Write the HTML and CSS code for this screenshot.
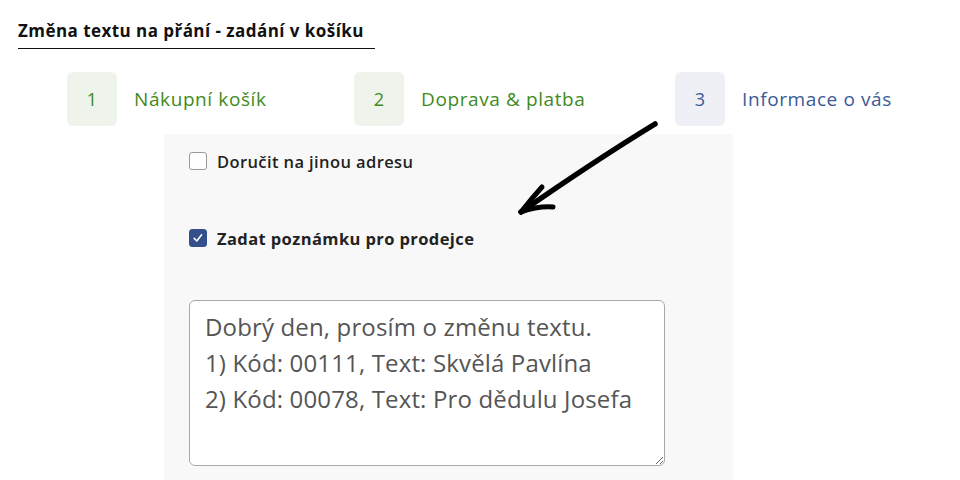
FILE: index.html
```html
<!DOCTYPE html>
<html lang="cs">
<head>
<meta charset="utf-8">
<title>Změna textu na přání</title>
<link rel="stylesheet" href="styles.css">
</head>
<body>
<div class="page">
  <h1 class="title">Změna textu na přání - zadání v košíku</h1>
  <ol class="steps">
    <li class="step step-done"><span class="step-num">1</span><span class="step-label">Nákupní košík</span></li>
    <li class="step step-done"><span class="step-num">2</span><span class="step-label">Doprava &amp; platba</span></li>
    <li class="step step-current"><span class="step-num">3</span><span class="step-label">Informace o vás</span></li>
  </ol>
  <div class="panel">
    <label class="check"><span class="box"></span><span class="check-label">Doručit na jinou adresu</span></label>
    <label class="check check-on"><span class="box"><svg viewBox="0 0 18 18" width="18" height="18"><path d="M5.2 9.4 L7.8 12 L12.6 5.8" fill="none" stroke="#fff" stroke-width="1.6" stroke-linecap="round" stroke-linejoin="round"/></svg></span><span class="check-label">Zadat poznámku pro prodejce</span></label>
    <textarea class="note" readonly>Dobrý den, prosím o změnu textu.
1) Kód: 00111, Text: Skvělá Pavlína
2) Kód: 00078, Text: Pro dědulu Josefa</textarea>
  </div>
  <svg class="arrow" width="960" height="480" viewBox="0 0 960 480">
    <g fill="none" stroke="#000" stroke-linecap="round" stroke-linejoin="round">
      <path d="M655 124 Q596 160 521 212" stroke-width="5.5"/>
      <path d="M521 212 Q532 198 542 187" stroke-width="5"/>
      <path d="M521 212 Q538 206 553 207" stroke-width="5"/>
    </g>
  </svg>
</div>
</body>
</html>
```
FILE: styles.css
```css
* { box-sizing: border-box; }
html, body { margin: 0; padding: 0; background: #fff; }
body { font-family: "Open Sans", "Lato", sans-serif; color: #222; }
.page { position: relative; width: 960px; height: 480px; overflow: hidden; }

.title {
  display: inline-block;
  margin: 0 0 0 18px;
  padding: 19px 11px 5px 0;
  font-size: 17px;
  font-weight: 700;
  line-height: 24px;
  color: #111;
  border-bottom: 1px solid #111;
  letter-spacing: 0.45px;
}

.steps {
  list-style: none;
  margin: 23px 0 0 67px;
  padding: 0;
  display: grid;
  grid-template-columns: 287px 321px auto;
  height: 54px;
}
.step { display: flex; align-items: center; gap: 17px; }
.step-num {
  width: 50px; height: 54px;
  border-radius: 6px;
  display: flex; align-items: center; justify-content: center;
  font-size: 18px;
}
.step-label { font-size: 19px; letter-spacing: 0.6px; }
.step-done .step-num { background: #eef3ec; color: #3f8a1c; }
.step-done .step-label { color: #3f8a1c; }
.step-current .step-num { background: #eef0f6; color: #3b5a95; }
.step-current .step-label { color: #3b5a95; }

.panel {
  margin: 8px 0 0 164px;
  width: 569px;
  height: 346px;
  background: #f8f8f8;
  padding: 18px 0 0 25px;
  display: flex;
  flex-direction: column;
  align-items: flex-start;
}
.check { display: flex; align-items: center; gap: 10px; height: 18px; }
.check + .check { margin-top: 59px; }
.box {
  width: 18px; height: 18px;
  border: 1px solid #9a9a9a;
  border-radius: 3px;
  background: #fff;
  display: block;
}
.box svg { display: block; margin: -1px; }
.check-on .box { background: #34508c; border-color: #34508c; }
.check-label { font-size: 16.5px; font-weight: 600; letter-spacing: 0.4px; color: #222; }
.check-on .check-label { font-weight: 700; }

.note {
  margin-top: 53px;
  width: 476px;
  height: 166px;
  border: 1px solid #a8a8a8;
  border-radius: 6px;
  background: #fff;
  padding: 8px 15px;
  font-family: "Open Sans", "Lato", sans-serif;
  font-size: 24px;
  line-height: 36px;
  letter-spacing: 0.15px;
  color: #555;
  outline: none;
}

.arrow { position: absolute; left: 0; top: 0; pointer-events: none; }
```
